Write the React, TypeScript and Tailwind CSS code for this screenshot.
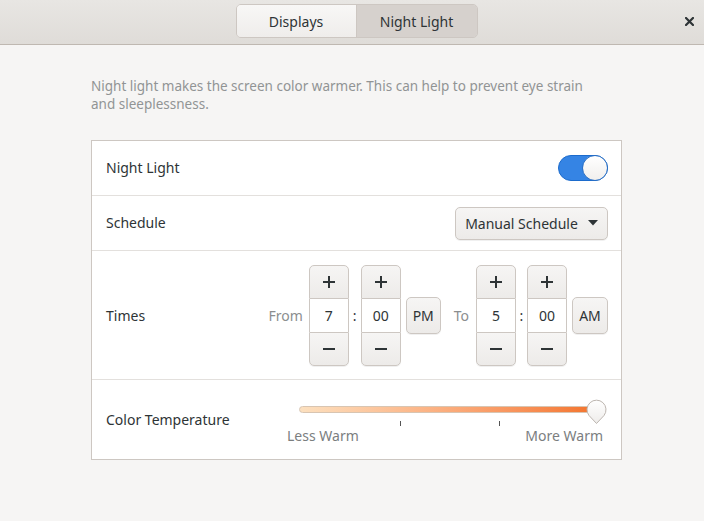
import { ReactNode } from 'react'

function Btn({ children, className = '' }: { children: ReactNode; className?: string }) {
  return (
    <div
      className={`flex items-center justify-center border border-[#cdc7c2] bg-gradient-to-b from-[#f6f5f4] to-[#edebe9] text-[#2e3436] shadow-[0_1px_0_rgba(0,0,0,0.06)] ${className}`}
    >
      {children}
    </div>
  )
}

function Spin({ value }: { value: string }) {
  return (
    <div className="flex flex-col w-[40px]">
      <Btn className="h-[34px] rounded-t-[5px]">
        <span className="relative block w-[12px] h-[12px]">
          <span className="absolute left-0 top-[5px] w-[12px] h-[2px] bg-[#2e3436]" />
          <span className="absolute left-[5px] top-0 w-[2px] h-[12px] bg-[#2e3436]" />
        </span>
      </Btn>
      <div className="h-[33px] flex items-center justify-center bg-white border-x border-[#cdc7c2] text-[14px]">{value}</div>
      <Btn className="h-[34px] rounded-b-[5px]">
        <span className="block w-[12px] h-[2px] bg-[#2e3436]" />
      </Btn>
    </div>
  )
}

function Row({ children, className = '' }: { children: ReactNode; className?: string }) {
  return (
    <div className={`flex items-center justify-between pl-[14px] pr-[13px] border-b border-[#e3e0dd] last:border-0 ${className}`}>
      {children}
    </div>
  )
}

export default function App() {
  return (
    <div className="w-[704px] h-[521px] bg-[#f6f5f4] font-['Noto_Sans',sans-serif] text-[#2e3436] flex flex-col overflow-hidden">
      <header className="relative h-[45px] shrink-0 flex items-center justify-center bg-gradient-to-b from-[#e8e6e3] to-[#dfdcd8] border-b border-[#bfb8b1]">
        <div className="flex h-[34px] mt-[-2px] ml-[9px] text-[14px] rounded-[5px] border border-[#cdc7c2] overflow-hidden">
          <div className="w-[120px] flex items-center justify-center bg-gradient-to-b from-[#f8f7f6] to-[#efedeb] border-r border-[#cdc7c2]">
            Displays
          </div>
          <div className="w-[120px] flex items-center justify-center bg-[#d6d1cd]">Night Light</div>
        </div>
        <svg className="absolute right-[10px] top-[17px]" width="9" height="9" viewBox="0 0 9 9">
          <path d="M1 1 L8 8 M8 1 L1 8" stroke="#2e3436" strokeWidth="2.2" strokeLinecap="square" />
        </svg>
      </header>
      <main className="pl-[91px] pr-[82px] pt-[32px]">
        <p className="text-[13.5px] leading-[18px] text-[#919494] pr-[20px]">
          Night light makes the screen color warmer. This can help to prevent eye strain and sleeplessness.
        </p>
        <div className="mt-[27px] bg-white border border-[#cdc7c2] text-[14px]">
          <Row className="h-[55px]">
            <span className="mt-[-2px]">Night Light</span>
            <div className="relative w-[50px] h-[26px] rounded-full bg-[#3584e4] border border-[#1c6bcc]">
              <div className="absolute right-[-1px] top-[-1px] w-[26px] h-[26px] rounded-full bg-gradient-to-b from-white to-[#f1efed] border border-[#2a6fc4]" />
            </div>
          </Row>
          <Row className="h-[55px]">
            <span className="mt-[-2px]">Schedule</span>
            <Btn className="w-[153px] h-[33px] rounded-[5px] gap-[10px]">
              <span>Manual Schedule</span>
              <svg width="10" height="6" viewBox="0 0 10 6">
                <path d="M0 0 H10 L5 5.5 Z" fill="#2e3436" />
              </svg>
            </Btn>
          </Row>
          <Row className="h-[129px]">
            <span>Times</span>
            <div className="flex items-center">
              <span className="text-[#8b8e8f] mr-[6px]">From</span>
              <Spin value="7" />
              <span className="w-[12px] text-center">:</span>
              <Spin value="00" />
              <Btn className="ml-[5px] w-[35px] h-[37px] rounded-[5px]">PM</Btn>
              <span className="text-[#8b8e8f] ml-[13px] mr-[7px]">To</span>
              <Spin value="5" />
              <span className="w-[11px] text-center">:</span>
              <Spin value="00" />
              <Btn className="ml-[5px] w-[36px] h-[37px] rounded-[5px]">AM</Btn>
            </div>
          </Row>
          <Row className="h-[79px]">
            <span>Color Temperature</span>
            <div className="relative w-[322px] h-[79px] mr-[-1px]">
              <div className="absolute left-[12px] right-[10px] top-[26px] h-[7px] rounded-full border border-[#d8c5b2] bg-gradient-to-r from-[#fce0bf] to-[#f37329]" />
              <span className="absolute left-[113px] top-[41px] w-px h-[5px] bg-[#555]" />
              <span className="absolute left-[212px] top-[41px] w-px h-[5px] bg-[#555]" />
              <svg className="absolute left-[299px] top-[19px]" width="21" height="26" viewBox="0 0 21 26">
                <defs>
                  <linearGradient id="kn" x1="0" y1="0" x2="0" y2="1">
                    <stop offset="0" stopColor="#ffffff" />
                    <stop offset="1" stopColor="#eeecea" />
                  </linearGradient>
                </defs>
                <path d="M10.5 24.5 L3 16.5 A9.5 9.5 0 1 1 18 16.5 Z" fill="url(#kn)" stroke="#bdb6b0" strokeWidth="1" />
              </svg>
              <span className="absolute left-0 top-[45px] text-[14px] text-[#7b7e7f]">Less Warm</span>
              <span className="absolute right-[6px] top-[45px] text-[14px] text-[#7b7e7f]">More Warm</span>
            </div>
          </Row>
        </div>
      </main>
    </div>
  )
}
